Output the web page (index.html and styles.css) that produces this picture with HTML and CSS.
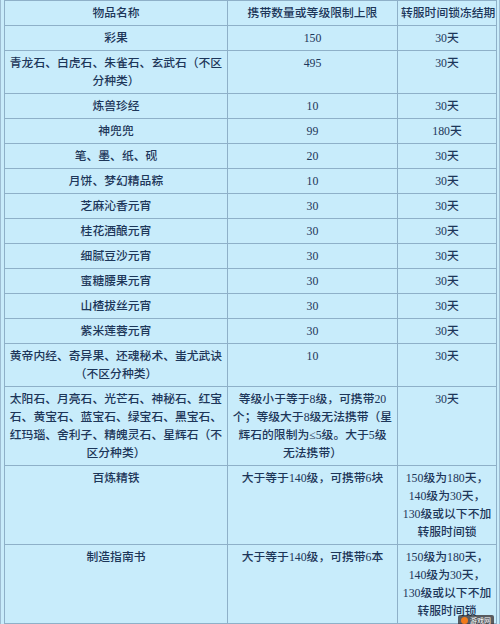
FILE: index.html
```html
<!DOCTYPE html>
<html lang="zh-CN">
<head>
<meta charset="utf-8">
<title>物品携带限制</title>
<link rel="stylesheet" href="styles.css">
</head>
<body>
<div class="frame">
<table class="grid">
<colgroup><col class="c1"><col class="c2"><col class="c3"></colgroup>
<tr><td>物品名称</td><td>携带数量或等级限制上限</td><td class="nw">转服时间锁冻结期</td></tr>
<tr><td>彩果</td><td>150</td><td>30天</td></tr>
<tr><td class="nw">青龙石、白虎石、朱雀石、玄武石（不区<br>分种类）</td><td>495</td><td>30天</td></tr>
<tr><td>炼兽珍经</td><td>10</td><td>30天</td></tr>
<tr><td>神兜兜</td><td>99</td><td>180天</td></tr>
<tr><td>笔、墨、纸、砚</td><td>20</td><td>30天</td></tr>
<tr><td>月饼、梦幻精品粽</td><td>10</td><td>30天</td></tr>
<tr><td>芝麻沁香元宵</td><td>30</td><td>30天</td></tr>
<tr><td>桂花酒酿元宵</td><td>30</td><td>30天</td></tr>
<tr><td>细腻豆沙元宵</td><td>30</td><td>30天</td></tr>
<tr><td>蜜糖腰果元宵</td><td>30</td><td>30天</td></tr>
<tr><td>山楂拔丝元宵</td><td>30</td><td>30天</td></tr>
<tr><td>紫米莲蓉元宵</td><td>30</td><td>30天</td></tr>
<tr><td class="nw">黄帝内经、奇异果、还魂秘术、蚩尤武诀<br>（不区分种类）</td><td>10</td><td>30天</td></tr>
<tr><td class="nw">太阳石、月亮石、光芒石、神秘石、红宝<br>石、黄宝石、蓝宝石、绿宝石、黑宝石、<br>红玛瑙、舍利子、精魄灵石、星辉石（不<br>区分种类）</td><td class="nw">等级小于等于8级，可携带20<br>个；等级大于8级无法携带（星<br>辉石的限制为≤5级。大于5级<br>无法携带）</td><td>30天</td></tr>
<tr><td>百炼精铁</td><td class="nw">大于等于140级，可携带6块</td><td class="nw">150级为180天，<br>140级为30天，<br>130级或以下不加<br>转服时间锁</td></tr>
<tr><td>制造指南书</td><td class="nw">大于等于140级，可携带6本</td><td class="nw">150级为180天，<br>140级为30天，<br>130级或以下不加<br>转服时间锁</td></tr>
</table>
<div class="mark"><span class="dot"></span><span class="mtext">游戏网</span></div>
</div>
</body>
</html>
```
FILE: styles.css
```css
html, body {
  margin: 0;
  padding: 0;
  background: #c8ecfb;
}
.frame {
  position: relative;
  width: 492px;
  margin-top: -4px;
  padding: 3px;
  border: 1px solid #9dbcd2;
  background: #c8ecfb;
}
.grid {
  border-collapse: collapse;
  table-layout: fixed;
  width: 492px;
}
.c1 { width: 223px; }
.c2 { width: 170px; }
.c3 { width: 99px; }
.grid td {
  border: 1px solid #8eb0c8;
  padding: 3px 3px;
  line-height: 18px;
  font-family: "Liberation Serif", "Noto Sans CJK SC", serif;
  font-size: 11.8px;
  font-weight: 500;
  color: #1d3659;
  text-align: center;
  vertical-align: top;
  overflow: visible;
}
.grid td.nw {
  white-space: nowrap;
}
.mark {
  position: absolute;
  right: 5px;
  bottom: 1px;
  display: flex;
  align-items: center;
  gap: 2px;
  height: 11px;
  padding: 0 3px;
  background: rgba(40, 30, 30, 0.7);
  border-radius: 2px;
}
.dot {
  width: 7px;
  height: 7px;
  border-radius: 50%;
  background: #f07a1a;
}
.mtext {
  font-family: "Noto Sans CJK SC", sans-serif;
  font-size: 7px;
  line-height: 11px;
  color: #ffffff;
}
```
